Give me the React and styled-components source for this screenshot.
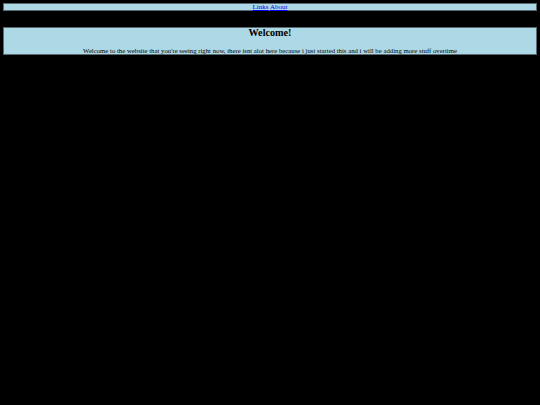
import styled, { createGlobalStyle } from "styled-components";

const GlobalStyle = createGlobalStyle`
  html, body {
    background: black;
  }
  body {
    margin: 3px;
    font-family: "Liberation Serif", "Times New Roman", serif;
  }
`;

const NavBar = styled.nav`
  background: lightblue;
  border: 1px solid #5a6a70;
  text-align: center;
  font-size: 7px;
  line-height: 6px;

  a {
    color: #0000ee;
    text-decoration: underline;
  }
`;

const WelcomeBox = styled.section`
  margin-top: 16px;
  background: lightblue;
  border: 1px solid #5a6a70;
  text-align: center;
  padding-bottom: 0;

  h2 {
    margin: 0;
    font-size: 10.2px;
    line-height: 9px;
  }

  p {
    margin: 10px 0 0;
    font-size: 6.75px;
    line-height: 7px;
  }
`;

const App = () => {
  return (
    <>
      <GlobalStyle />
      <NavBar>
        <a href="#links">Links</a> <a href="#about">About</a>
      </NavBar>
      <WelcomeBox>
        <h2>Welcome!</h2>
        <p>
          Welcome to the website that you're seeing right now, there isnt alot
          here because i just started this and i will be adding more stuff
          overtime
        </p>
      </WelcomeBox>
    </>
  );
};

export default App;
